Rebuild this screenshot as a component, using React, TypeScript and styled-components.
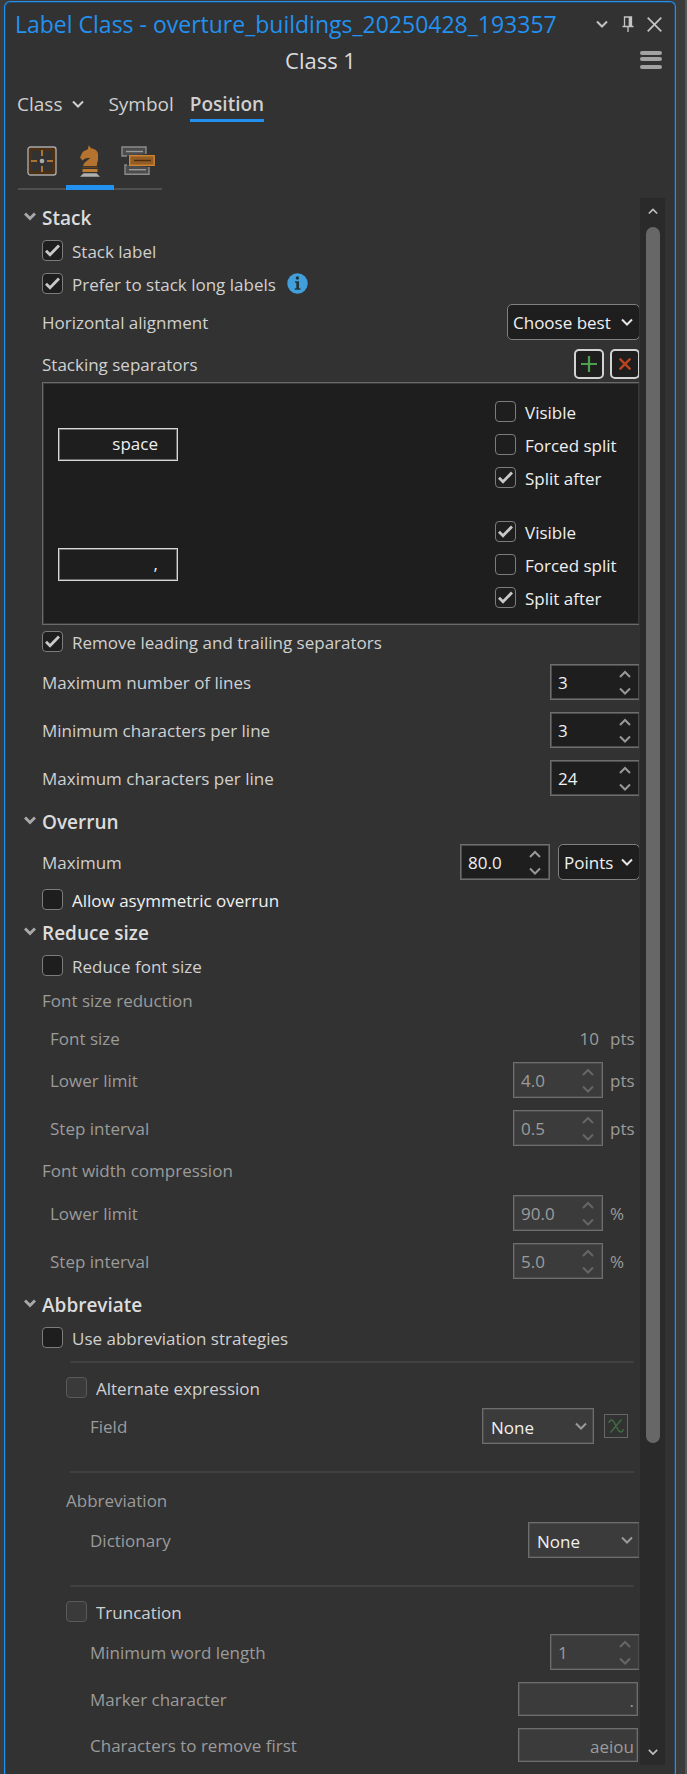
import React, { useId, useRef, useState } from "react";
import styled, { createGlobalStyle, css } from "styled-components";

const color = {
  accent: "#2291f0",
  panel: "#323232",
  outer: "#3b3b3b",
  field: "#1e1e1e",
  fieldOff: "#3b3b3b",
  line: "#6e6e6e",
  text: "#d0d0d0",
  bright: "#f0f0f0",
  muted: "#9b9b9b",
};

const GlobalStyle = createGlobalStyle`
  *, *::before, *::after { box-sizing: border-box; }
  body {
    margin: 0;
    background: ${color.outer};
    color: ${color.text};
    font: 17px/24px "Open Sans", "Noto Sans", sans-serif;
  }
  button, input, select { font: inherit; color: inherit; margin: 0; }
  button { padding: 0; border: 0; background: none; cursor: pointer; }
  svg { display: block; }
`;

const Page = styled.div`
  padding: 1px 9px 0 4px;
  border-right: 2px solid #555;
  min-height: 100vh;
  display: flex;
`;

const Panel = styled.main`
  flex: 1;
  min-width: 0;
  background: ${color.panel};
  border: 1px solid ${color.accent};
  border-bottom: 0;
  border-radius: 6px 6px 0 0;
  box-shadow: inset 1px 1px 0 #24496e, inset -1px 0 0 #24496e;
  padding-bottom: 9px;
`;

const TitleBar = styled.header`
  display: flex;
  align-items: center;
  height: 44px;
  padding: 0 11px 0 10px;
`;

const Title = styled.h1`
  flex: 1;
  margin: 0;
  font-size: 23px;
  line-height: 32px;
  font-weight: 400;
  color: ${color.accent};
  white-space: nowrap;
`;

const WindowButtons = styled.div`
  display: flex;
  gap: 6px;
  color: #c4c4c4;
`;

const IconButton = styled.button`
  display: grid;
  place-items: center;
  width: 20px;
  height: 20px;
`;

const ClassBar = styled.div`
  display: grid;
  grid-template-columns: 1fr 22px;
  align-items: center;
  height: 26px;
  padding: 0 13px 0 12px;
`;

const ClassName = styled.h2`
  margin: 0;
  padding-right: 16px;
  font-size: 22px;
  line-height: 28px;
  font-weight: 400;
  text-align: center;
  color: #dcdcdc;
`;

const Tabs = styled.nav`
  display: flex;
  gap: 16px;
  padding: 16px 12px 0;
`;

const Tab = styled.button<{ $active?: boolean; $menu?: boolean }>`
  display: flex;
  align-items: center;
  gap: 10px;
  height: 34px;
  margin-right: ${(p) => (p.$menu ? 8 : 0)}px;
  font-size: 19px;
  line-height: 28px;
  border-bottom: 3px solid ${(p) => (p.$active ? color.accent : "transparent")};
  font-weight: ${(p) => (p.$active ? 600 : 400)};
`;

const ModeTabs = styled.div`
  display: flex;
  margin: 12px 13px 0;
`;

const ModeTab = styled.button<{ $active?: boolean }>`
  display: grid;
  place-items: center;
  width: 48px;
  height: 56px;
  border-bottom: 2px solid #505050;
  ${(p) =>
    p.$active &&
    css`
      border-bottom: 5px solid ${color.accent};
      padding-top: 3px;
    `}
`;

const ScrollArea = styled.div`
  display: flex;
  gap: 1px;
  margin: 8px 10px 0 1px;
`;

const Content = styled.div`
  flex: 1;
  min-width: 0;
  overflow: hidden;
  padding: 4px 0 3px 18px;
`;

const Body = styled.div`
  margin: 0 -1px 0 18px;
`;

const SectionHeader = styled.button<{ $gap?: number }>`
  display: flex;
  align-items: center;
  gap: 6px;
  height: 32px;
  margin-top: ${(p) => p.$gap ?? 0}px;
  font-size: 19px;
  line-height: 24px;
  font-weight: 600;
  color: #dcdcdc;

  svg { margin-bottom: 4px; color: #a8a8a8; }
`;

const Row = styled.div<{ $gap?: number; $indent?: number; $off?: boolean; $short?: boolean }>`
  display: flex;
  align-items: center;
  height: ${(p) => (p.$short ? 34 : 36)}px;
  margin-top: ${(p) => p.$gap ?? 0}px;
  padding-left: ${(p) => p.$indent ?? 0}px;
  color: ${(p) => (p.$off ? color.muted : color.text)};
`;

const FieldLabel = styled.label`
  flex: 1;
  padding-top: 2px;
`;

const Caption = styled.span`
  flex: 1;
  padding-top: 2px;
`;

const CheckRow = styled.label<{ $gap?: number; $indent?: number; $bright?: boolean }>`
  display: flex;
  align-items: center;
  gap: 9px;
  height: 33px;
  margin-top: ${(p) => p.$gap ?? 0}px;
  padding-left: ${(p) => p.$indent ?? 0}px;
  color: ${(p) => (p.$bright ? color.bright : color.text)};

  > svg { margin-left: 2px; }
`;

const Overlay = styled.span`
  display: grid;
  align-items: center;

  > * { grid-area: 1 / 1; }
  > svg { pointer-events: none; }
`;

const CheckOverlay = styled(Overlay)`
  justify-items: center;

  input:not(:checked) + svg { visibility: hidden; }
`;

const Box = styled.input`
  appearance: none;
  width: 21px;
  height: 21px;
  border: 1px solid #7c7c7c;
  border-radius: 4px;
  background: ${color.field};

  &:disabled {
    border-color: #5a5a5a;
    background: #3a3a3a;
  }
`;

const CheckText = styled.span`
  padding-top: 2px;
`;

const SelectOverlay = styled(Overlay)<{ $width: number }>`
  width: ${(p) => p.$width}px;

  > svg { justify-self: end; margin-right: 7px; color: #e6e6e6; }
  > select:disabled + svg { color: #9a9a9a; }
`;

const SelectBox = styled.select`
  appearance: none;
  width: 100%;
  height: 36px;
  padding: 2px 4px 0 5px;
  border: 1px solid #808080;
  border-radius: 5px;
  background: ${color.field};
  color: ${color.bright};

  &:disabled {
    padding: 4px 4px 0 8px;
    border-color: ${color.line};
    border-radius: 0;
    background: ${color.fieldOff};
    box-shadow: inset 0 0 0 1px #4c4c4c;
    opacity: 1;
  }
`;

const SpinBox = styled.span<{ $off?: boolean }>`
  display: flex;
  width: 90px;
  height: 36px;
  border: 1px solid ${color.line};
  box-shadow: inset 0 0 0 1px #4c4c4c;
  background: ${(p) => (p.$off ? color.fieldOff : color.field)};
  color: ${(p) => (p.$off ? color.muted : color.bright)};
`;

const SpinInput = styled.input`
  appearance: textfield;
  flex: 1;
  min-width: 0;
  padding: 2px 0 0 7px;
  border: 0;
  background: none;

  &::-webkit-inner-spin-button { appearance: none; }
`;

const SpinButtons = styled.span<{ $off?: boolean }>`
  display: grid;
  grid-template-rows: 1fr 1fr;
  width: 28px;
  color: ${(p) => (p.$off ? "#666" : "#999")};
`;

const SpinButton = styled.button`
  display: grid;
  place-items: center;
`;

const OverrunFields = styled.span`
  display: flex;
  gap: 8px;
`;

const Value = styled.span`
  padding: 2px 4px 0 0;
`;

const Unit = styled.span`
  width: 37px;
  padding: 2px 0 0 7px;
`;

const TextBox = styled.input`
  width: 120px;
  height: 34px;
  margin-right: 2px;
  padding: 3px 3px 0;
  border: 1px solid ${color.line};
  box-shadow: inset 0 0 0 1px #4c4c4c;
  background: ${color.fieldOff};
  color: ${color.muted};
  text-align: right;
`;

const ToolButton = styled.button`
  display: grid;
  place-items: center;
  width: 30px;
  height: 30px;
  margin-left: 6px;
  border: 2px solid #d2d2d2;
  border-radius: 5px;
  background: ${color.field};
`;

const ExpressionButton = styled.button`
  display: grid;
  place-items: center;
  width: 24px;
  height: 24px;
  margin: 0 12px 0 10px;
  border: 1px solid #666;
`;

const List = styled.ul`
  display: grid;
  gap: 21px;
  margin: 0;
  padding: 12px 20px 10px 15px;
  list-style: none;
  border: 1px solid #6a6a6a;
  box-shadow: inset 0 0 0 1px #3a3a3a;
  background: ${color.field};
`;

const ListItem = styled.li`
  display: flex;
  align-items: center;
  justify-content: space-between;
`;

const ListOptions = styled.div`
  width: 124px;
`;

const SeparatorInput = styled.input`
  width: 120px;
  height: 33px;
  padding: 0 19px 2px 4px;
  border: 1px solid #d8d8d8;
  box-shadow: inset 0 0 0 1px #6a6a6a;
  background: ${color.field};
  color: ${color.bright};
  text-align: right;
`;

const Rule = styled.hr<{ $gap: number }>`
  height: 2px;
  margin: ${(p) => p.$gap}px 6px 0 28px;
  border: 0;
  background: #404040;
`;

const ScrollBar = styled.div`
  display: flex;
  flex-direction: column;
  align-items: center;
  width: 25px;
  background: #2a2a2a;
  color: #c0c0c0;
`;

const ScrollButton = styled.button`
  display: grid;
  place-items: center;
  width: 25px;
  height: 26px;
  flex: none;
`;

const ScrollTrack = styled.div`
  flex: 1;
  width: 14px;
  margin: 3px 0 0;
`;

const ScrollThumb = styled.div`
  height: 80.4%;
  border-radius: 7px;
  background: #676767;
`;

type ChevronProps = { up?: boolean; width?: number; size?: number };

const Chevron = ({ up, width = 2, size = 12 }: ChevronProps) => (
  <svg width={size} height={size} viewBox="0 0 12 12" fill="none" stroke="currentColor" strokeWidth={width} aria-hidden="true">
    <path d={up ? "M1 9l5-5 5 5" : "M1 3.5l5 5 5-5"} />
  </svg>
);

const InfoIcon = () => (
  <svg width="21" height="21" viewBox="0 0 21 21" role="img" aria-label="Information">
    <circle cx="10.5" cy="10.5" r="10.2" fill="#41a0dc" />
    <circle cx="10.4" cy="5" r="1.7" fill="#26323a" />
    <path d="M8 8.2h4v7h1.4v1.5H7.8v-1.5h1.5V9.7H8z" fill="#26323a" />
  </svg>
);

const PlacementIcon = () => (
  <svg width="30" height="30" viewBox="0 0 30 30" fill="none" aria-hidden="true">
    <rect x="3.2" y="3.2" width="23.6" height="23.6" stroke="#4b3015" strokeWidth="3.6" />
    <rect x="1" y="1" width="28" height="28" rx="2.5" stroke="#a9a9a9" strokeWidth="1.4" />
    <path d="M15 4v6M15 20v6M4 15h6M20 15h6" stroke="#d58a35" strokeWidth="1.5" />
    <circle cx="15" cy="15" r="2.3" fill="#a9a9a9" />
  </svg>
);

const KnightIcon = () => (
  <svg width="22" height="32" viewBox="0 0 22 32" aria-hidden="true">
    <path d="M9.8 0.2L12 3.2C16 4 19 5.500 19 9.500V14C19 16.500 17.800 18 17.800 21H4.200C4.200 17.500 9.500 15.500 11.500 12.600C10 13.400 8 13 6.200 13.500L3.500 15.400L1 12.600L3.800 6.800L8.800 4.200Z" fill="#b4742f" />
    <path d="M3.500 21.800h15v1h-15z" fill="#70451a" />
    <path d="M3.500 24h15v3h-15z" fill="#c07c32" />
    <path d="M4.500 28.300h13l3.500 3.400H1z" fill="#b0b0b0" />
  </svg>
);

const ConflictIcon = () => (
  <svg width="34" height="30" viewBox="0 0 34 30" fill="none" strokeWidth="1.4" aria-hidden="true">
    <path d="M6 10H1V1h24v7" fill="#4c4c4c" stroke="#8c8c8c" />
    <path d="M5 5.500h17" stroke="#9a9a9a" />
    <path d="M6 19H4v9.300h24V21" fill="#4c4c4c" stroke="#8c8c8c" />
    <path d="M8 23.700h17" stroke="#9a9a9a" />
    <rect x="8.700" y="9.700" width="24.500" height="9.600" fill="#925d26" stroke="#d08430" />
    <path d="M13 14.500h17" stroke="#4b2c0c" />
  </svg>
);

const PinIcon = () => (
  <svg width="12" height="16" viewBox="0 0 12 16" fill="none" stroke="currentColor" aria-hidden="true">
    <path d="M2.500 10V1h7v9M.5 10.500h11M6 11v5" strokeWidth="1.3" />
    <path d="M8 1v9" strokeWidth="2.6" />
  </svg>
);

const CloseIcon = () => (
  <svg width="15" height="15" viewBox="0 0 15 15" stroke="currentColor" strokeWidth="1.7" aria-hidden="true">
    <path d="M.7.7l13.600 13.600M14.300.7L.7 14.300" />
  </svg>
);

const MenuIcon = () => (
  <svg width="22" height="18" viewBox="0 0 22 18" fill="#a2a2a2" aria-hidden="true">
    <rect width="22" height="4" rx="2" />
    <rect y="6" width="22" height="4" rx="2" />
    <rect y="14" width="22" height="4" rx="2" />
  </svg>
);

type CheckProps = {
  label: string;
  checked?: boolean;
  disabled?: boolean;
  bright?: boolean;
  gap?: number;
  indent?: number;
  children?: React.ReactNode;
};

const Check = ({ label, checked, disabled, bright, gap, indent, children }: CheckProps) => (
  <CheckRow $gap={gap} $indent={indent} $bright={bright}>
    <CheckOverlay>
      <Box type="checkbox" defaultChecked={checked} disabled={disabled} />
      <svg width="15" height="13" viewBox="0 0 15 13" fill="none" stroke="#c8c8c8" strokeWidth="2.8" aria-hidden="true">
        <path d="M1 6.800l4 4L14 1.500" />
      </svg>
    </CheckOverlay>
    <CheckText>{label}</CheckText>
    {children}
  </CheckRow>
);

type SelectProps = { id?: string; label?: string; value: string; width: number; disabled?: boolean };

const Select = ({ id, label, value, width, disabled }: SelectProps) => (
  <SelectOverlay $width={width}>
    <SelectBox id={id} aria-label={label} disabled={disabled}>
      <option>{value}</option>
    </SelectBox>
    <Chevron />
  </SelectOverlay>
);

type SpinnerProps = { id: string; value: string; step?: number; disabled?: boolean };

const Spinner = ({ id, value, step = 1, disabled }: SpinnerProps) => {
  const input = useRef<HTMLInputElement>(null);
  return (
    <SpinBox $off={disabled}>
      <SpinInput ref={input} id={id} type="number" step={step} defaultValue={value} disabled={disabled} />
      <SpinButtons $off={disabled}>
        <SpinButton type="button" aria-label="Increase" disabled={disabled} onClick={() => input.current?.stepUp()}>
          <Chevron up />
        </SpinButton>
        <SpinButton type="button" aria-label="Decrease" disabled={disabled} onClick={() => input.current?.stepDown()}>
          <Chevron />
        </SpinButton>
      </SpinButtons>
    </SpinBox>
  );
};

type NumberRowProps = Omit<SpinnerProps, "id"> & {
  label: string;
  unit?: string;
  gap: number;
  indent?: number;
};

const NumberRow = ({ label, unit, gap, indent, ...rest }: NumberRowProps) => {
  const id = useId();
  return (
    <Row $gap={gap} $indent={indent} $off={rest.disabled}>
      <FieldLabel htmlFor={id}>{label}</FieldLabel>
      <Spinner id={id} {...rest} />
      {unit && <Unit>{unit}</Unit>}
    </Row>
  );
};

type TextRowProps = { label: string; value: string };

const TextRow = ({ label, value }: TextRowProps) => {
  const id = useId();
  return (
    <Row $gap={12} $indent={48} $off $short>
      <FieldLabel htmlFor={id}>{label}</FieldLabel>
      <TextBox id={id} type="text" defaultValue={value} disabled />
    </Row>
  );
};

type SectionProps = { title: string; gap?: number; children: React.ReactNode };

const Section = ({ title, gap, children }: SectionProps) => {
  const [open, setOpen] = useState(true);
  return (
    <section>
      <SectionHeader type="button" $gap={gap} aria-expanded={open} onClick={() => setOpen(!open)}>
        <Chevron width={3} />
        {title}
      </SectionHeader>
      {open && <Body>{children}</Body>}
    </section>
  );
};

const separators = [
  { text: "space", visible: false },
  { text: ",", visible: true },
];

export default function App() {
  return (
    <>
      <GlobalStyle />
      <Page>
        <Panel>
          <TitleBar>
            <Title>Label Class - overture_buildings_20250428_193357</Title>
            <WindowButtons>
              <IconButton type="button" aria-label="Options"><Chevron /></IconButton>
              <IconButton type="button" aria-label="Auto hide"><PinIcon /></IconButton>
              <IconButton type="button" aria-label="Close"><CloseIcon /></IconButton>
            </WindowButtons>
          </TitleBar>
          <ClassBar>
            <ClassName>Class 1</ClassName>
            <IconButton type="button" aria-label="Menu"><MenuIcon /></IconButton>
          </ClassBar>
          <Tabs>
            <Tab type="button" $menu>Class <Chevron /></Tab>
            <Tab type="button">Symbol</Tab>
            <Tab type="button" $active aria-current="page">Position</Tab>
          </Tabs>
          <ModeTabs>
            <ModeTab type="button" aria-label="Position"><PlacementIcon /></ModeTab>
            <ModeTab type="button" aria-label="Fitting strategy" $active><KnightIcon /></ModeTab>
            <ModeTab type="button" aria-label="Conflict resolution"><ConflictIcon /></ModeTab>
          </ModeTabs>

          <ScrollArea>
            <Content>
              <Section title="Stack">
                <Check label="Stack label" checked />
                <Check label="Prefer to stack long labels" checked><InfoIcon /></Check>
                <Row $gap={4}>
                  <FieldLabel htmlFor="alignment">Horizontal alignment</FieldLabel>
                  <Select id="alignment" value="Choose best" width={133} />
                </Row>
                <Row $gap={6}>
                  <Caption>Stacking separators</Caption>
                  <ToolButton type="button" aria-label="Add separator">
                    <svg width="16" height="16" viewBox="0 0 16 16" stroke="#4da04d" strokeWidth="2.2" aria-hidden="true">
                      <path d="M8 0v16M0 8h16" />
                    </svg>
                  </ToolButton>
                  <ToolButton type="button" aria-label="Remove separator">
                    <svg width="12" height="12" viewBox="0 0 12 12" stroke="#b8441f" strokeWidth="2.4" aria-hidden="true">
                      <path d="M.6.6l10.800 10.800M11.400.6L.6 11.400" />
                    </svg>
                  </ToolButton>
                </Row>
                <List>
                  {separators.map((s) => (
                    <ListItem key={s.text}>
                      <SeparatorInput type="text" aria-label="Separator" defaultValue={s.text} />
                      <ListOptions>
                        <Check label="Visible" checked={s.visible} bright />
                        <Check label="Forced split" bright />
                        <Check label="Split after" checked bright />
                      </ListOptions>
                    </ListItem>
                  ))}
                </List>
                <Check label="Remove leading and trailing separators" checked />
                <NumberRow label="Maximum number of lines" value="3" gap={6} />
                <NumberRow label="Minimum characters per line" value="3" gap={12} />
                <NumberRow label="Maximum characters per line" value="24" gap={12} />
              </Section>

              <Section title="Overrun" gap={10}>
                <Row $gap={6}>
                  <FieldLabel htmlFor="overrun">Maximum</FieldLabel>
                  <OverrunFields>
                    <Spinner id="overrun" value="80.0" step={0.1} />
                    <Select label="Overrun unit" value="Points" width={82} />
                  </OverrunFields>
                </Row>
                <Check label="Allow asymmetric overrun" gap={3} bright />
              </Section>

              <Section title="Reduce size" gap={1}>
                <Check label="Reduce font size" />
                <Row $off><Caption>Font size reduction</Caption></Row>
                <Row $gap={2} $indent={8} $off>
                  <Caption>Font size</Caption>
                  <Value>10</Value>
                  <Unit>pts</Unit>
                </Row>
                <NumberRow label="Lower limit" value="4.0" step={0.1} unit="pts" gap={6} indent={8} disabled />
                <NumberRow label="Step interval" value="0.5" step={0.1} unit="pts" gap={12} indent={8} disabled />
                <Row $gap={6} $off><Caption>Font width compression</Caption></Row>
                <NumberRow label="Lower limit" value="90.0" step={0.1} unit="%" gap={7} indent={8} disabled />
                <NumberRow label="Step interval" value="5.0" step={0.1} unit="%" gap={12} indent={8} disabled />
              </Section>

              <Section title="Abbreviate" gap={10}>
                <Check label="Use abbreviation strategies" />
                <Rule $gap={7} />
                <Check label="Alternate expression" gap={8} indent={24} disabled />
                <Row $gap={4} $indent={48} $off>
                  <FieldLabel htmlFor="field">Field</FieldLabel>
                  <Select id="field" value="None" width={112} disabled />
                  <ExpressionButton type="button" aria-label="Set expression" disabled>
                    <svg width="16" height="14" viewBox="0 0 16 14" fill="none" stroke="#3f6b42" strokeWidth="1.5" aria-hidden="true">
                      <path d="M1 4c0-3 3-4 4.500-1.500l5 9C12 14 15.500 13 15 10M13.500.5L2.500 13.500" />
                    </svg>
                  </ExpressionButton>
                </Row>
                <Rule $gap={27} />
                <Row $gap={9} $indent={24} $off><Caption>Abbreviation</Caption></Row>
                <Row $gap={4} $indent={48} $off>
                  <FieldLabel htmlFor="dictionary">Dictionary</FieldLabel>
                  <Select id="dictionary" value="None" width={112} disabled />
                </Row>
                <Rule $gap={27} />
                <Check label="Truncation" gap={8} indent={24} disabled />
                <NumberRow label="Minimum word length" value="1" gap={6} indent={48} disabled />
                <TextRow label="Marker character" value="." />
                <TextRow label="Characters to remove first" value="aeiou" />
              </Section>
            </Content>
            <ScrollBar>
              <ScrollButton type="button" aria-label="Scroll up"><Chevron up size={10} /></ScrollButton>
              <ScrollTrack><ScrollThumb /></ScrollTrack>
              <ScrollButton type="button" aria-label="Scroll down"><Chevron size={10} /></ScrollButton>
            </ScrollBar>
          </ScrollArea>
        </Panel>
      </Page>
    </>
  );
}
